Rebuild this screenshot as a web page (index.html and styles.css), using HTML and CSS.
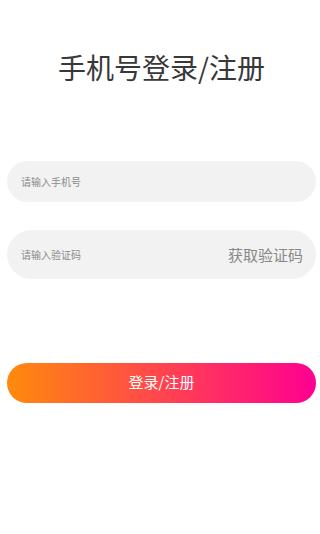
FILE: index.html
```html
<!DOCTYPE html>
<html lang="zh">
<head>
<meta charset="utf-8">
<link rel="stylesheet" href="styles.css">
</head>
<body>
<div class="page">
  <h1 class="title">手机号登录/注册</h1>
  <div class="field field-phone">
    <span class="placeholder">请输入手机号</span>
  </div>
  <div class="field field-code">
    <span class="placeholder">请输入验证码</span>
    <span class="get-code">获取验证码</span>
  </div>
  <div class="btn">登录/注册</div>
</div>
</body>
</html>
```
FILE: styles.css
```css
html, body {
  margin: 0;
  padding: 0;
  background: #ffffff;
}
body {
  font-family: "Noto Sans CJK SC", "Noto Sans", sans-serif;
}
.page {
  padding: 0 4px 0 7px;
  display: flex;
  flex-direction: column;
}
.title {
  margin: 51px 0 0 0;
  font-size: 28px;
  line-height: 32px;
  font-weight: 400;
  color: #383838;
  text-align: center;
}
.field {
  background: #f2f2f2;
  border-radius: 999px;
  display: flex;
  align-items: center;
  justify-content: space-between;
  padding: 0 13px 0 14px;
}
.field-phone {
  margin-top: 78px;
  height: 41px;
}
.field-code {
  margin-top: 28px;
  height: 49px;
}
.placeholder {
  font-size: 10px;
  color: #8c8c8c;
  line-height: 14px;
}
.get-code {
  font-size: 15px;
  color: #888888;
  line-height: 20px;
}
.btn {
  margin-top: 84px;
  height: 40px;
  border-radius: 999px;
  background: linear-gradient(to right, #ff8a0c, #ff0090);
  color: #ffffff;
  font-size: 15px;
  line-height: 20px;
  padding-bottom: 2px;
  box-sizing: border-box;
  display: flex;
  align-items: center;
  justify-content: center;
}
```
